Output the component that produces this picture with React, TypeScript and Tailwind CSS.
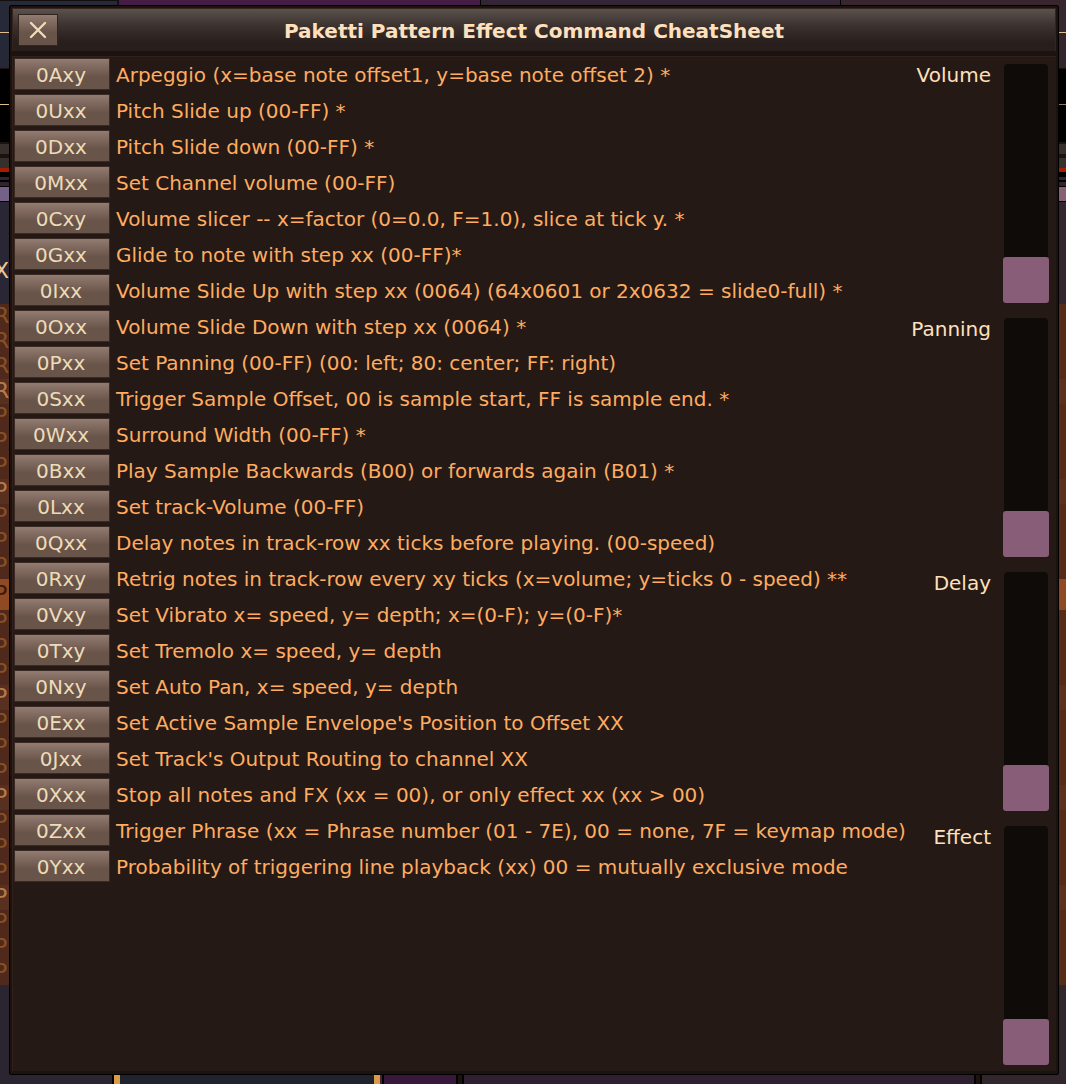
import { useState } from "react";

const effects: [string, string][] = [
  ["0Axy", "Arpeggio (x=base note offset1, y=base note offset 2) *"],
  ["0Uxx", "Pitch Slide up (00-FF) *"],
  ["0Dxx", "Pitch Slide down (00-FF) *"],
  ["0Mxx", "Set Channel volume (00-FF)"],
  ["0Cxy", "Volume slicer -- x=factor (0=0.0, F=1.0), slice at tick y. *"],
  ["0Gxx", "Glide to note with step xx (00-FF)*"],
  ["0Ixx", "Volume Slide Up with step xx (0064) (64x0601 or 2x0632 = slide0-full) *"],
  ["0Oxx", "Volume Slide Down with step xx (0064) *"],
  ["0Pxx", "Set Panning (00-FF) (00: left; 80: center; FF: right)"],
  ["0Sxx", "Trigger Sample Offset, 00 is sample start, FF is sample end. *"],
  ["0Wxx", "Surround Width (00-FF) *"],
  ["0Bxx", "Play Sample Backwards (B00) or forwards again (B01) *"],
  ["0Lxx", "Set track-Volume (00-FF)"],
  ["0Qxx", "Delay notes in track-row xx ticks before playing. (00-speed)"],
  ["0Rxy", "Retrig notes in track-row every xy ticks (x=volume; y=ticks 0 - speed) **"],
  ["0Vxy", "Set Vibrato x= speed, y= depth; x=(0-F); y=(0-F)*"],
  ["0Txy", "Set Tremolo x= speed, y= depth"],
  ["0Nxy", "Set Auto Pan, x= speed, y= depth"],
  ["0Exx", "Set Active Sample Envelope's Position to Offset XX"],
  ["0Jxx", "Set Track's Output Routing to channel XX"],
  ["0Xxx", "Stop all notes and FX (xx = 00), or only effect xx (xx > 00)"],
  ["0Zxx", "Trigger Phrase (xx = Phrase number (01 - 7E), 00 = none, 7F = keymap mode)"],
  ["0Yxx", "Probability of triggering line playback (xx) 00 = mutually exclusive mode"],
];

const columns = ["Volume", "Panning", "Delay", "Effect"];

const CURRENT_ROW = 11;

function PatternRow({ index }: { index: number }) {
  const current = index === CURRENT_ROW;
  const beat = index % 4 === 3;
  const left = current
    ? "h-[31px] bg-[#8f4923] text-[#3a1a08]"
    : beat
      ? "h-[25px] bg-[#573020] text-[#b97a48]"
      : "h-[25px] bg-[#4f2a1c] text-[#885023]";
  const right = current ? "bg-[#8f4923]" : beat ? "bg-[#5a301f]" : "bg-[#552c18]";
  return (
    <div className={"flex items-center overflow-hidden text-[22px] leading-[22px] " + left}>
      <span className="-ml-[6px] w-1/2 pb-[2px]" aria-hidden="true">
        {index < 4 ? "R" : "P"}
      </span>
      <span className={"h-full grow " + right} />
    </div>
  );
}

function TrackerBackdrop() {
  return (
    <div className="absolute inset-0 flex flex-col overflow-hidden bg-[#1c1310]">
      <div className="flex h-8 shrink-0">
        <div className="w-[119px] border-t border-r-2 border-[#14100f] bg-[#262938]" />
        <div className="w-[362px] border-r border-black bg-[#451d44]" />
        <div className="w-[360px] border-r border-black bg-[#342536]" />
        <div className="grow bg-[#38262e]" />
      </div>
      <div className="h-px shrink-0 bg-[#e4bd8c]" />
      <div className="h-[35px] shrink-0 bg-linear-to-r from-[#252836] to-[#34252d]" />
      <div className="h-9 shrink-0 border-t border-[#1c1310] bg-black" />
      <div className="h-px shrink-0 bg-linear-to-r from-[#e4bd8c] to-[#947860]" />
      <div className="h-[37px] shrink-0 bg-black" />
      <div className="mt-[2px] h-[10px] shrink-0 bg-[#36302d]" />
      <div className="mt-1 h-[10px] shrink-0 bg-[#36302d]" />
      <div className="h-1 shrink-0 bg-[#a51d00]" />
      <div className="h-[5px] shrink-0 bg-black" />
      <div className="h-[3px] shrink-0 bg-[#30252f]" />
      <div className="h-[2px] shrink-0 bg-black" />
      <div className="h-1 shrink-0 bg-[#30252f]" />
      <div className="h-4 shrink-0 border-y border-black bg-linear-to-r from-[#756086] to-[#876174]" />
      <div className="flex h-[102px] shrink-0 items-end overflow-hidden bg-linear-to-r from-[#292635] to-[#33262e] pb-[22px] text-[22px] leading-[22px] text-[#f0c79c]">
        <span className="-ml-[6px]" aria-hidden="true">X</span>
      </div>
      <div className="shrink-0">
        {Array.from({ length: 27 }, (_, i) => (
          <PatternRow key={i} index={i} />
        ))}
      </div>
      <div className="flex grow bg-[#2b2432]">
        <div className="w-[114px] border-r-2 border-black bg-[#2b2431]" />
        <div className="w-[266px] border-x-6 border-[#d99b45] bg-[#20222e]" />
        <div className="w-1 border-r-2 border-black bg-[#4a203d]" />
        <div className="w-[74px] border-r-2 border-black bg-[#38183a]" />
        <div className="w-[6px] border-r-2 border-black bg-[#1c1310]" />
        <div className="w-[512px] border-r-2 border-black bg-[#2e2030]" />
        <div className="w-[6px] border-r-2 border-black bg-[#1c1310]" />
        <div className="grow bg-[#32262d]" />
      </div>
    </div>
  );
}

function ColumnSlider({ label }: { label: string }) {
  const [value, setValue] = useState(0);
  const id = "slider-" + label.toLowerCase();
  return (
    <div className="flex items-start justify-end gap-3">
      <label htmlFor={id} className="leading-6 text-[#ffe0bd]">
        {label}
      </label>
      <input
        id={id}
        type="range"
        min={0}
        max={255}
        value={value}
        onChange={(e) => setValue(Number(e.target.value))}
        className="m-0 h-[241px] w-[46px] appearance-none bg-transparent [direction:rtl] [writing-mode:vertical-lr] [&::-webkit-slider-runnable-track]:mx-px [&::-webkit-slider-runnable-track]:h-full [&::-webkit-slider-runnable-track]:w-[44px] [&::-webkit-slider-runnable-track]:rounded-[4px] [&::-webkit-slider-runnable-track]:bg-[#0f0b08] [&::-webkit-slider-thumb]:-ml-px [&::-webkit-slider-thumb]:h-[46px] [&::-webkit-slider-thumb]:w-[46px] [&::-webkit-slider-thumb]:appearance-none [&::-webkit-slider-thumb]:rounded-[3px] [&::-webkit-slider-thumb]:bg-[#885d77]"
      />
    </div>
  );
}

export default function App() {
  return (
    <div className="relative flex min-h-screen flex-col pt-[5px] pr-[7px] pb-[9px] pl-[9px] font-['DejaVu_Sans',sans-serif] text-[20px]">
      <TrackerBackdrop />
      <section
        role="dialog"
        aria-labelledby="sheet-title"
        className="relative flex grow flex-col rounded-[2px] border border-black bg-[#1c1310] px-[2px] pt-[2px] pb-[3px]"
      >
        <header className="grid h-[43px] grid-cols-[1fr_auto_1fr] items-center border border-b-0 border-[#35251f] bg-linear-to-b from-[#5b514d] via-[#3b312e] via-40% to-[#281e1b] to-80% px-[5px]">
          <button
            type="button"
            aria-label="Close"
            className="flex h-8 w-10 items-center justify-center border border-[#34241e] bg-linear-to-b from-[#927b70] via-[#69544a] via-60% to-[#69544a]"
          >
            <svg viewBox="0 0 18 18" className="size-[18px]" stroke="#eddcb8" strokeWidth="2.4" strokeLinecap="round" aria-hidden="true">
              <path d="M2 2 16 16M16 2 2 16" />
            </svg>
          </button>
          <h1 id="sheet-title" className="pt-[2px] font-bold leading-6 text-[#ffe0bd]">
            Paketti Pattern Effect Command CheatSheet
          </h1>
        </header>
        <div className="mt-[5px] flex grow items-start justify-between border-t border-l border-[#30211b] bg-[#241914] pr-[7px] pb-[5px] pl-px">
          <ul className="flex flex-col gap-1 pt-px">
            {effects.map(([code, text]) => (
              <li key={code} className="flex items-center gap-[6px]">
                <button
                  type="button"
                  className="h-8 w-24 border border-[#3a2a23] bg-linear-to-b from-[#927b70] via-[#69544a] via-60% to-[#69544a] pt-[2px] pr-[2px] leading-6 text-[#eddcb8]"
                >
                  {code}
                </button>
                <span className="whitespace-nowrap pt-[2px] leading-6 text-[#ffac60]">{text}</span>
              </li>
            ))}
          </ul>
          <div className="flex flex-col gap-[13px] pt-[6px]">
            {columns.map((label) => (
              <ColumnSlider key={label} label={label} />
            ))}
          </div>
        </div>
      </section>
    </div>
  );
}
